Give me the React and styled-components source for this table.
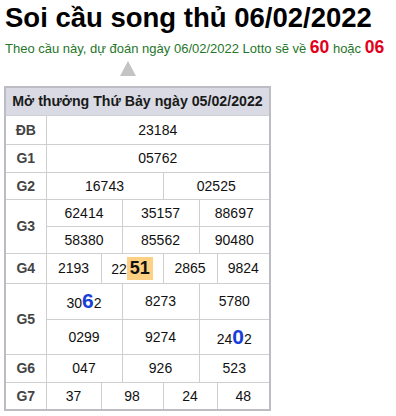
import React from 'react';
import styled, { createGlobalStyle } from 'styled-components';

const GlobalStyle = createGlobalStyle`
  body {
    margin: 0;
    background: #fff;
    font-family: "Liberation Sans", Arial, sans-serif;
  }
`;

const data = {
  title: 'Soi cầu song thủ 06/02/2022',
  date: '06/02/2022',
  pair: ['60', '06'],
  heading: 'Mở thưởng Thứ Bảy ngày 05/02/2022',
};

const cols = [41, 55, 21, 41, 36, 18, 53];

export default function App() {
  return (
    <Page>
      <GlobalStyle />
      <Title>{data.title}</Title>
      <Lead>
        Theo cầu này, dự đoán ngày {data.date} Lotto sẽ về <Hot>{data.pair[0]}</Hot> hoặc{' '}
        <Hot>{data.pair[1]}</Hot>
      </Lead>
      <Arrow />
      <Board>
        <colgroup>
          {cols.map((w, i) => (
            <col key={i} style={{ width: w }} />
          ))}
        </colgroup>
        <thead>
          <Row $h={28}>
            <Head colSpan={7}>{data.heading}</Head>
          </Row>
        </thead>
        <tbody>
          <Row $h={29}>
            <Label>ĐB</Label>
            <Cell colSpan={6}>23184</Cell>
          </Row>
          <Row>
            <Label>G1</Label>
            <Cell colSpan={6}>05762</Cell>
          </Row>
          <Row $h={27}>
            <Label>G2</Label>
            <Cell colSpan={3}>16743</Cell>
            <Cell colSpan={3}>02525</Cell>
          </Row>
          <Row $h={27}>
            <Label rowSpan={2}>G3</Label>
            <Cell colSpan={2}>62414</Cell>
            <Cell colSpan={2}>35157</Cell>
            <Cell colSpan={2}>88697</Cell>
          </Row>
          <Row $h={27}>
            <Cell colSpan={2}>58380</Cell>
            <Cell colSpan={2}>85562</Cell>
            <Cell colSpan={2}>90480</Cell>
          </Row>
          <Row $h={30}>
            <Label>G4</Label>
            <Cell>2193</Cell>
            <Cell colSpan={2}>
              22<Mark>51</Mark>
            </Cell>
            <Cell colSpan={2}>2865</Cell>
            <Cell>9824</Cell>
          </Row>
          <Row $h={36}>
            <Label rowSpan={2}>G5</Label>
            <Cell colSpan={2}>
              30<Digit>6</Digit>2
            </Cell>
            <Cell colSpan={2}>8273</Cell>
            <Cell colSpan={2}>5780</Cell>
          </Row>
          <Row $h={35}>
            <Cell colSpan={2}>0299</Cell>
            <Cell colSpan={2}>9274</Cell>
            <Cell colSpan={2}>
              24<Digit>0</Digit>2
            </Cell>
          </Row>
          <Row>
            <Label>G6</Label>
            <Cell colSpan={2}>047</Cell>
            <Cell colSpan={2}>926</Cell>
            <Cell colSpan={2}>523</Cell>
          </Row>
          <Row>
            <Label>G7</Label>
            <Cell>37</Cell>
            <Cell colSpan={2}>98</Cell>
            <Cell colSpan={2}>24</Cell>
            <Cell>48</Cell>
          </Row>
        </tbody>
      </Board>
    </Page>
  );
}

const Page = styled.div`
  padding: 0 4px;
`;

const Title = styled.h1`
  margin: 0;
  padding: 1px 0 0 1px;
  font-size: 27.5px;
  line-height: 34px;
  font-weight: bold;
  color: #000;
`;

const Lead = styled.p`
  margin: 2px 0 0 1px;
  font-size: 13px;
  line-height: 20px;
  color: #26762a;
`;

const Hot = styled.b`
  color: #e3001b;
  font-size: 17.5px;
`;

const Arrow = styled.div`
  width: 0;
  height: 0;
  margin: 2px 0 10px 116px;
  border-left: 8px solid transparent;
  border-right: 8px solid transparent;
  border-bottom: 15px solid #c4c4c4;
`;

const Board = styled.table`
  width: 265px;
  table-layout: fixed;
  border-collapse: collapse;
  border: 2px solid #bcbcc4;
  font-size: 14px;
  color: #111;
`;

const Row = styled.tr`
  height: ${(p) => p.$h || 28}px;
`;

const Head = styled.th`
  background: #d9dae3;
  padding: 0;
  border: 1px solid #cfcfd6;
  font-size: 14.2px;
  font-weight: bold;
  color: #1a1a1a;
  text-align: center;
  white-space: nowrap;
`;

const Label = styled.td`
  padding: 0;
  border: 1px solid #cfcfcf;
  text-align: center;
  font-weight: bold;
  color: #444;
`;

const Cell = styled.td`
  padding: 0;
  border: 1px solid #cfcfcf;
  text-align: center;
  white-space: nowrap;
  vertical-align: middle;
`;

const Mark = styled.span`
  display: inline-block;
  padding: 1px 3px;
  background: #fdd083;
  font-size: 18px;
  font-weight: bold;
  color: #111;
  line-height: 21px;
`;

const Digit = styled.span`
  font-size: 21px;
  font-weight: bold;
  color: #1740d8;
`;
